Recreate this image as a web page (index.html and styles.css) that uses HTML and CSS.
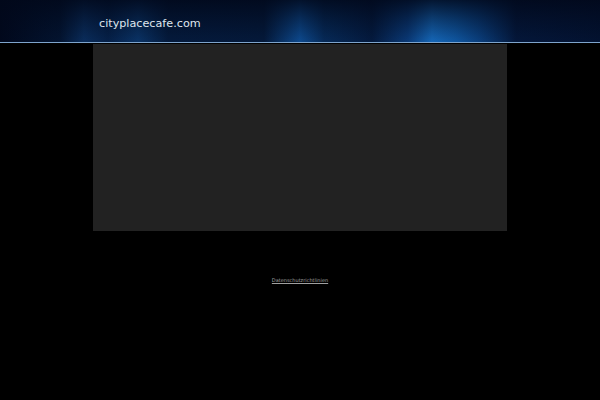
FILE: index.html
```html
<!DOCTYPE html>
<html>
<head>
<meta charset="utf-8">
<link rel="stylesheet" href="styles.css">
</head>
<body>
<header class="top">
  <div class="top-inner">
    <span class="site-name">cityplacecafe.com</span>
  </div>
</header>
<main class="content">
  <div class="panel"></div>
</main>
<footer class="foot">
  <a class="privacy" href="#">Datenschutzrichtlinien</a>
</footer>
</body>
</html>
```
FILE: styles.css
```css
html, body {
  margin: 0;
  padding: 0;
  background: #000;
  height: 100%;
}
body {
  font-family: "DejaVu Sans", Verdana, sans-serif;
}
.top {
  height: 42px;
  border-bottom: 1px solid #7ea4cc;
  background:
    linear-gradient(180deg, rgba(1,8,26,0.85) 0%, rgba(1,8,26,0.45) 45%, rgba(1,8,26,0) 100%),
    linear-gradient(90deg,
      #01081c 0%,
      #031430 10%,
      #0a2d5c 14%,
      #052048 18%,
      #0a3366 23%,
      #041a3c 28%,
      #04193a 44%,
      #0d4a8f 50%,
      #062a58 54%,
      #041a3e 62%,
      #0a3a78 68%,
      #1567b8 72%,
      #0f56a0 76%,
      #0a3e7c 80%,
      #04173a 86%,
      #031230 100%);
}
.top-inner {
  padding-left: 99px;
  padding-top: 12px;
}
.site-name {
  color: #dfe6ee;
  font-size: 11.2px;
  line-height: 14px;
}
.content {
  display: flex;
  justify-content: center;
  padding-top: 1px;
}
.panel {
  width: 414px;
  height: 187px;
  background: #222222;
}
.foot {
  text-align: center;
  padding-top: 41px;
  line-height: 10px;
}
.privacy {
  color: #a0a0a0;
  font-size: 5px;
  text-decoration: underline;
}
```
